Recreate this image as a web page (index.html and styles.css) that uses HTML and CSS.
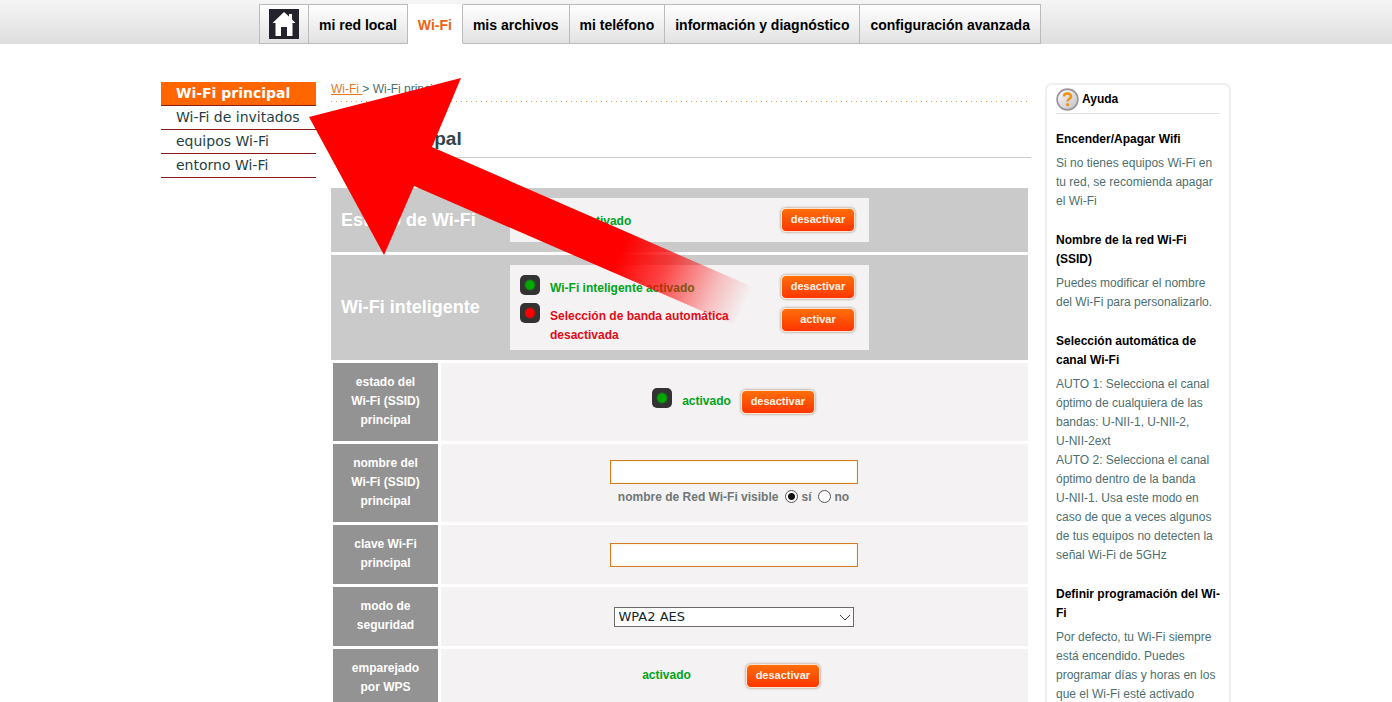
FILE: index.html
```html
<!DOCTYPE html>
<html lang="es">
<head>
    <meta charset="UTF-8">
    <meta name="viewport" content="width=device-width, initial-scale=1.0">
    <title>Wi-Fi principal</title>
    <link rel="stylesheet" href="styles.css">
</head>
<body>
    <header class="topbar">
        <div class="wrapper">
            <nav class="tabs">
                <a class="tab tab-home" href="#" aria-label="inicio">
                    <svg width="30" height="30" viewBox="0 0 30 30">
                        <rect width="30" height="30" fill="#23222d"/>
                        <path d="M15 3 L20 7.6 V5 H23 V10.4 L26.5 14 H23.5 V27 H18 V18 H12 V27 H6.5 V14 H3.5 Z" fill="#fff"/>
                    </svg>
                </a>
                <a class="tab" href="#">mi red local</a>
                <a class="tab active" href="#">Wi-Fi</a>
                <a class="tab" href="#">mis archivos</a>
                <a class="tab" href="#">mi teléfono</a>
                <a class="tab" href="#">información y diagnóstico</a>
                <a class="tab" href="#">configuración avanzada</a>
            </nav>
        </div>
    </header>

    <div class="wrapper page">
        <nav class="sidebar">
            <a class="active" href="#">Wi-Fi principal</a>
            <a href="#">Wi-Fi de invitados</a>
            <a href="#">equipos Wi-Fi</a>
            <a href="#">entorno Wi-Fi</a>
        </nav>

        <main class="content">
            <div class="breadcrumb"><a href="#">Wi-Fi </a> &gt; Wi-Fi principal</div>
            <h1>Wi-Fi principal</h1>

            <section class="band">
                <h2>Estado de Wi-Fi</h2>
                <div class="panel">
                    <div class="states">
                        <div class="state on"><span class="led"></span><span>Wi-Fi activado</span></div>
                    </div>
                    <div class="actions">
                        <button class="btn" type="button">desactivar</button>
                    </div>
                </div>
            </section>

            <section class="band">
                <h2>Wi-Fi inteligente</h2>
                <div class="panel">
                    <div class="states">
                        <div class="state on"><span class="led"></span><span>Wi-Fi inteligente activado</span></div>
                        <div class="state off"><span class="led"></span><span>Selección de banda automática desactivada</span></div>
                    </div>
                    <div class="actions">
                        <button class="btn" type="button">desactivar</button>
                        <button class="btn" type="button">activar</button>
                    </div>
                </div>
            </section>

            <form class="settings">
                <div class="row">
                    <div class="name">estado del Wi-Fi (SSID) principal</div>
                    <div class="value">
                        <div class="inline">
                            <span class="led on"></span>
                            <span class="status">activado</span>
                            <button class="btn" type="button">desactivar</button>
                        </div>
                    </div>
                </div>
                <div class="row">
                    <label class="name" for="ssid">nombre del Wi-Fi (SSID) principal</label>
                    <div class="value">
                        <input class="field" type="text" id="ssid">
                        <div class="visible" role="radiogroup" aria-labelledby="visibleLabel">
                            <span id="visibleLabel">nombre de Red Wi-Fi visible</span>
                            <label><input type="radio" name="visible" checked>sí</label>
                            <label><input type="radio" name="visible">no</label>
                        </div>
                    </div>
                </div>
                <div class="row">
                    <label class="name" for="clave">clave Wi-Fi principal</label>
                    <div class="value">
                        <input class="field" type="text" id="clave">
                    </div>
                </div>
                <div class="row">
                    <label class="name" for="modo">modo de seguridad</label>
                    <div class="value">
                        <div class="select">
                            <select id="modo">
                                <option>WPA2 AES</option>
                            </select>
                            <svg width="12" height="8" viewBox="0 0 12 8"><path d="M1 1 L6 6 L11 1" fill="none" stroke="#444" stroke-width="1"/></svg>
                        </div>
                    </div>
                </div>
                <div class="row">
                    <div class="name">emparejado por WPS</div>
                    <div class="value">
                        <div class="inline wide">
                            <span class="status">activado</span>
                            <button class="btn" type="button">desactivar</button>
                        </div>
                    </div>
                </div>
            </form>
        </main>

        <aside class="help">
            <div class="help-title">
                <svg width="23" height="23" viewBox="0 0 23 23">
                    <defs>
                        <linearGradient id="ball" x1="0" y1="0" x2="1" y2="1">
                            <stop offset="0" stop-color="#fff"/>
                            <stop offset="1" stop-color="#bdbdc4"/>
                        </linearGradient>
                    </defs>
                    <circle cx="11.5" cy="11.5" r="10.4" fill="url(#ball)" stroke="#9a959c" stroke-width="1.6"/>
                    <path d="M8 8.6 C8 4.6 15 4.6 15 8.4 C15 10.8 11.6 10.8 11.6 13.4" fill="none" stroke="#ee9413" stroke-width="2.6"/>
                    <circle cx="11.6" cy="16.6" r="1.6" fill="#ee9413"/>
                </svg>
                <span>Ayuda</span>
            </div>
            <h3>Encender/Apagar Wifi</h3>
            <p>Si no tienes equipos Wi-Fi en tu red, se recomienda apagar el Wi-Fi</p>
            <h3>Nombre de la red Wi-Fi (SSID)</h3>
            <p>Puedes modificar el nombre del Wi-Fi para personalizarlo.</p>
            <h3>Selección automática de canal Wi-Fi</h3>
            <p>AUTO 1: Selecciona el canal óptimo de cualquiera de las bandas: U-NII-1, U-NII-2,<br>
            U-NII-2ext<br>
            AUTO 2: Selecciona el canal óptimo dentro de la banda<br>
            U-NII-1. Usa este modo en caso de que a veces algunos de tus equipos no detecten la señal Wi-Fi de 5GHz</p>
            <h3>Definir programación del Wi-Fi</h3>
            <p>Por defecto, tu Wi-Fi siempre está encendido. Puedes programar días y horas en los que el Wi-Fi esté activado</p>
        </aside>

        <!-- Arrow pointing to the guest Wi-Fi entry -->
        <svg class="arrow" width="460" height="260" viewBox="300 70 460 260">
            <defs>
                <linearGradient id="fade" gradientUnits="userSpaceOnUse" x1="622" y1="248" x2="746" y2="302">
                    <stop offset="0" stop-color="#f00"/>
                    <stop offset="0.35" stop-color="#f00" stop-opacity="0.72"/>
                    <stop offset="0.75" stop-color="#f00" stop-opacity="0.22"/>
                    <stop offset="1" stop-color="#f00" stop-opacity="0"/>
                </linearGradient>
            </defs>
            <path d="M309 117 L461 78 L432 147 L755 288 L755 334 L414 186 L384 255 Z" fill="url(#fade)"/>
        </svg>
    </div>
</body>
</html>
```

FILE: styles.css
```css
* {
    margin: 0;
    padding: 0;
    box-sizing: border-box;
}

body {
    background-color: #ffffff;
    font-family: 'Liberation Sans', Arial, sans-serif;
    font-size: 12px;
    line-height: 19px;
    color: #4d6f6f;
    overflow-x: hidden;
}

.wrapper {
    width: 100%;
    max-width: 1070px;
    margin: 0 auto;
}

/* Top navigation */
.topbar {
    background: linear-gradient(#f5f5f5, #dedede);
    height: 44px;
    padding-top: 4px;
}

.tabs {
    display: flex;
    padding-left: 98px;
}

.tab {
    display: flex;
    align-items: center;
    height: 40px;
    padding: 2px 10px 0;
    border: 1px solid #bbbbbb;
    border-left-width: 0;
    background: linear-gradient(#ffffff, #e2e2e2);
    color: #000000;
    font-size: 14px;
    font-weight: bold;
    text-decoration: none;
    white-space: nowrap;
}

.tab-home {
    padding: 0 9px;
    border-left-width: 1px;
}

.tab.active {
    background: #ffffff;
    border-top-color: #ffffff;
    border-bottom-color: #ffffff;
    color: #f1620e;
}

/* Columns */
.page {
    position: relative;
    display: flex;
    align-items: flex-start;
    padding-top: 38px;
}

.sidebar {
    width: 155px;
    flex-shrink: 0;
    margin-right: 15px;
}

.sidebar a {
    display: block;
    padding-left: 15px;
    border-bottom: 1px solid #8a1c1c;
    color: #1f3f45;
    font-family: 'DejaVu Sans', Verdana, sans-serif;
    font-size: 14px;
    line-height: 23px;
    text-decoration: none;
    white-space: nowrap;
}

.sidebar a.active {
    background-color: #ff6600;
    color: #ffffff;
    font-weight: bold;
}

.content {
    flex: 1;
    min-width: 0;
    padding-right: 3px;
}

.breadcrumb {
    padding-bottom: 5px;
    background: repeating-linear-gradient(90deg, #dba050 0 1px, transparent 1px 5px) left bottom / 100% 1px no-repeat;
    line-height: 15px;
}

.breadcrumb a {
    color: #e87722;
}

h1 {
    margin: 24px -3px 30px 0;
    padding-bottom: 6px;
    border-bottom: 1px solid #cccccc;
    color: #2f4448;
    font-size: 19px;
    line-height: 25px;
}

/* Status bands */
.band {
    display: flex;
    align-items: center;
    margin-bottom: 3px;
    padding: 10px;
    background-color: #cacaca;
}

.band h2 {
    width: 169px;
    flex-shrink: 0;
    color: #ffffff;
    font-size: 18px;
}

.panel {
    display: flex;
    justify-content: space-between;
    width: 359px;
    min-height: 44px;
    padding: 10px 14px 5px 10px;
    background-color: #f4f2f3;
}

.states {
    display: flex;
    flex-direction: column;
    gap: 5px;
    width: 220px;
    font-weight: bold;
}

.state {
    display: flex;
    gap: 10px;
}

.state span:last-child {
    margin-top: 4px;
}

.state.on,
.status {
    color: #00a41a;
}

.state.off {
    color: #e20b18;
}

.led {
    width: 20px;
    height: 20px;
    flex-shrink: 0;
    border-radius: 5px;
    background: radial-gradient(circle, #00a800 4px, #333333 6px);
}

.off .led {
    background: radial-gradient(circle, #ff0000 4px, #333333 6px);
}

.actions {
    display: flex;
    flex-direction: column;
    gap: 9px;
}

.btn {
    width: 74px;
    height: 24px;
    padding-bottom: 2px;
    border: 1px solid #ffe3cc;
    border-radius: 5px;
    background: linear-gradient(#ff6f0a, #ff3500);
    box-shadow: 0 0 2px 1px #c9bdb4;
    color: #fff3e6;
    font-family: inherit;
    font-size: 11px;
    font-weight: bold;
    cursor: pointer;
}

/* Settings rows */
.settings {
    display: flex;
    flex-direction: column;
    gap: 3px;
    padding-left: 2px;
}

.row {
    display: flex;
    gap: 3px;
}

.name {
    width: 105px;
    flex-shrink: 0;
    padding: 10px 16px 11px;
    background-color: #949393;
    color: #ffffff;
    font-weight: bold;
    text-align: center;
}

.value {
    display: flex;
    flex: 1;
    flex-direction: column;
    align-items: center;
    justify-content: center;
    gap: 4px;
    padding-right: 2px;
    background-color: #f4f2f3;
}

.inline {
    display: flex;
    align-items: flex-end;
    gap: 10px;
    min-height: 28px;
    padding-bottom: 2px;
}

.inline.wide {
    gap: 55px;
    padding: 0 5px 6px 0;
}

.inline .led {
    align-self: flex-start;
}

.status {
    font-weight: bold;
    line-height: 25px;
}

.field {
    width: 248px;
    height: 24px;
    padding: 0 5px;
    border: 1px solid #d27a25;
    background-color: #ffffff;
    box-shadow: inset 0 0 2px #ffe2a0;
}

.visible {
    display: flex;
    gap: 7px;
    color: #6f7777;
    font-weight: bold;
}

.visible label {
    display: flex;
    gap: 3px;
}

.visible input {
    appearance: none;
    width: 13px;
    height: 13px;
    margin-top: 2px;
    border: 1px solid #555555;
    border-radius: 50%;
    background-color: #ffffff;
}

.visible input:checked {
    background: radial-gradient(circle, #111111 3px, #ffffff 4px);
}

.select {
    position: relative;
}

.select select {
    display: block;
    appearance: none;
    width: 240px;
    height: 20px;
    padding: 0 4px;
    border: 1px solid #6b6b6b;
    border-radius: 0;
    background-color: #ffffff;
    color: #10272b;
    font-family: 'DejaVu Sans', Verdana, sans-serif;
    font-size: 13px;
}

.select svg {
    position: absolute;
    right: 3px;
    top: 7px;
    pointer-events: none;
}

/* Help box */
.help {
    width: 186px;
    flex-shrink: 0;
    margin: 1px 0 0 14px;
    padding: 3px 9px 20px;
    border: 2px solid #f0f0f0;
    border-radius: 7px;
}

.help-title {
    display: flex;
    align-items: center;
    gap: 3px;
    margin-bottom: 16px;
    padding-bottom: 2px;
    border-bottom: 1px solid #e2e2e2;
    color: #000000;
    font-weight: bold;
}

.help h3 {
    margin-bottom: 5px;
    color: #000000;
    font-size: 12px;
}

.help p {
    margin-bottom: 20px;
}

.arrow {
    position: absolute;
    left: 139px;
    top: 26px;
    pointer-events: none;
}

@media (max-width: 900px) {
    .page {
        flex-wrap: wrap;
    }

    .tabs {
        padding-left: 0;
    }
}
```
